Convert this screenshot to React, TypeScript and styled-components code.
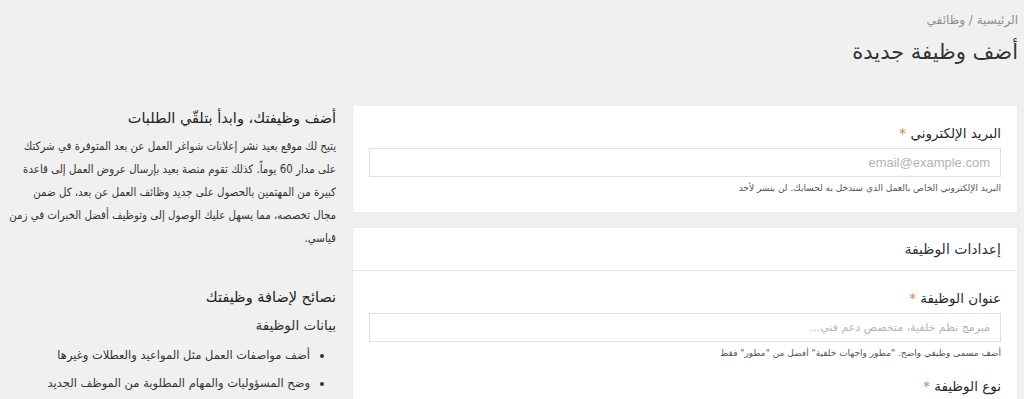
import styled, { createGlobalStyle } from 'styled-components';

const GlobalStyle = createGlobalStyle`
  html, body {
    margin: 0;
    padding: 0;
    background: #f0f0f0;
  }
  body {
    font-family: 'DejaVu Sans', 'Noto Sans', sans-serif;
    color: #333;
  }
`;

type Tip = { id: number; text: string };

const tips: Tip[] = [
  { id: 1, text: 'أضف مواصفات العمل مثل المواعيد والعطلات وغيرها' },
  { id: 2, text: 'وضح المسؤوليات والمهام المطلوبة من الموظف الجديد' },
];

const App = () => {
  return (
    <>
      <GlobalStyle />
      <Page dir="rtl">
        <Breadcrumb>
          <span>الرئيسية</span> / <span>وظائفي</span>
        </Breadcrumb>
        <PageTitle>أضف وظيفة جديدة</PageTitle>
        <Layout>
          <Main>
            <Card>
              <CardBody>
                <Field>
                  <Label>
                    البريد الإلكتروني <Required>*</Required>
                  </Label>
                  <Input type="email" placeholder="email@example.com" latin />
                  <Help>البريد الإلكتروني الخاص بالعمل الذي ستدخل به لحسابك. لن ينشر لأحد</Help>
                </Field>
              </CardBody>
            </Card>
            <Card>
              <CardHeader>إعدادات الوظيفة</CardHeader>
              <CardBody>
                <Field>
                  <Label>
                    عنوان الوظيفة <Required>*</Required>
                  </Label>
                  <Input type="text" placeholder="مبرمج نظم خلفية، متخصص دعم فني..." />
                  <Help>أضف مسمى وظيفي واضح. "مطور واجهات خلفية" أفضل من "مطور" فقط</Help>
                </Field>
                <Field>
                  <Label>
                    نوع الوظيفة <Required>*</Required>
                  </Label>
                </Field>
              </CardBody>
            </Card>
          </Main>
          <Sidebar>
            <SideTitle>أضف وظيفتك، وابدأ بتلقّي الطلبات</SideTitle>
            <SideText>
              يتيح لك موقع بعيد نشر إعلانات شواغر العمل عن بعد المتوفرة في شركتك على مدار 60
              يوماً. كذلك تقوم منصة بعيد بإرسال عروض العمل إلى قاعدة كبيرة من المهتمين بالحصول
              على جديد وظائف العمل عن بعد، كل ضمن مجال تخصصه، مما يسهل عليك الوصول إلى وتوظيف
              أفضل الخبرات في زمن قياسي.
            </SideText>
            <SideTitle spaced>نصائح لإضافة وظيفتك</SideTitle>
            <SideSubtitle>بيانات الوظيفة</SideSubtitle>
            <TipList>
              {tips.map((tip) => (
                <TipItem key={tip.id}>{tip.text}</TipItem>
              ))}
            </TipList>
          </Sidebar>
        </Layout>
      </Page>
    </>
  );
};

export default App;

const Page = styled.div`
  padding: 10px 6px 0 8px;
  box-sizing: border-box;
  width: 1024px;
`;

const Breadcrumb = styled.div`
  font-size: 12px;
  line-height: 20px;
  color: #8a8f96;
`;

const PageTitle = styled.h1`
  margin: 2px 0 0;
  font-size: 21px;
  font-weight: normal;
  line-height: 40px;
  color: #333;
`;

const Layout = styled.div`
  margin-top: 33px;
  display: grid;
  grid-template-columns: 666px 1fr;
  gap: 16px;
  align-items: start;
`;

const Main = styled.div`
  display: flex;
  flex-direction: column;
  gap: 14px;
`;

const Card = styled.section`
  background: #fff;
  border: 1px solid #ebebeb;
  box-sizing: border-box;
`;

const CardHeader = styled.div`
  padding: 0 16px;
  line-height: 42px;
  font-size: 14px;
  color: #333;
  border-bottom: 1px solid #e8e8e8;
`;

const CardBody = styled.div`
  padding: 19px 16px 17px;
  display: flex;
  flex-direction: column;
  gap: 18px;
`;

const Field = styled.div`
  display: flex;
  flex-direction: column;
`;

const Label = styled.label`
  font-size: 13.5px;
  line-height: 16px;
  color: #2b2b2b;
`;

const Required = styled.span`
  color: #c8874f;
`;

const Input = styled.input<{ latin?: boolean }>`
  margin-top: 7px;
  height: 29px;
  box-sizing: border-box;
  width: 100%;
  border: 1px solid #dcdfe3;
  background: #fff;
  padding: 0 10px;
  font-family: ${(p) => (p.latin ? "'Liberation Sans', Arial, sans-serif" : "'DejaVu Sans', sans-serif")};
  font-size: ${(p) => (p.latin ? '13px' : '11px')};
  color: #333;
  outline: none;
  &::placeholder {
    color: #b4b4b4;
  }
`;

const Help = styled.div`
  margin-top: 4px;
  font-size: 9px;
  line-height: 14px;
  color: #555;
`;

const Sidebar = styled.aside`
  padding-top: 1px;
`;

const SideTitle = styled.h2<{ spaced?: boolean }>`
  margin: ${(p) => (p.spaced ? '35px 0 0' : '0')};
  font-size: 14.5px;
  font-weight: normal;
  line-height: 24px;
  color: #222;
`;

const SideText = styled.p`
  margin: 5px 0 0;
  font-family: 'DejaVu Sans Condensed', 'DejaVu Sans', sans-serif;
  font-size: 11.4px;
  line-height: 23px;
  color: #333;
`;

const SideSubtitle = styled.h3`
  margin: 5px 0 0;
  font-size: 13.5px;
  font-weight: normal;
  line-height: 22px;
  color: #333;
`;

const TipList = styled.ul`
  margin: 5px 0 0;
  padding: 0 26px 0 0;
`;

const TipItem = styled.li`
  font-size: 11.5px;
  line-height: 28px;
  color: #333;
`;
